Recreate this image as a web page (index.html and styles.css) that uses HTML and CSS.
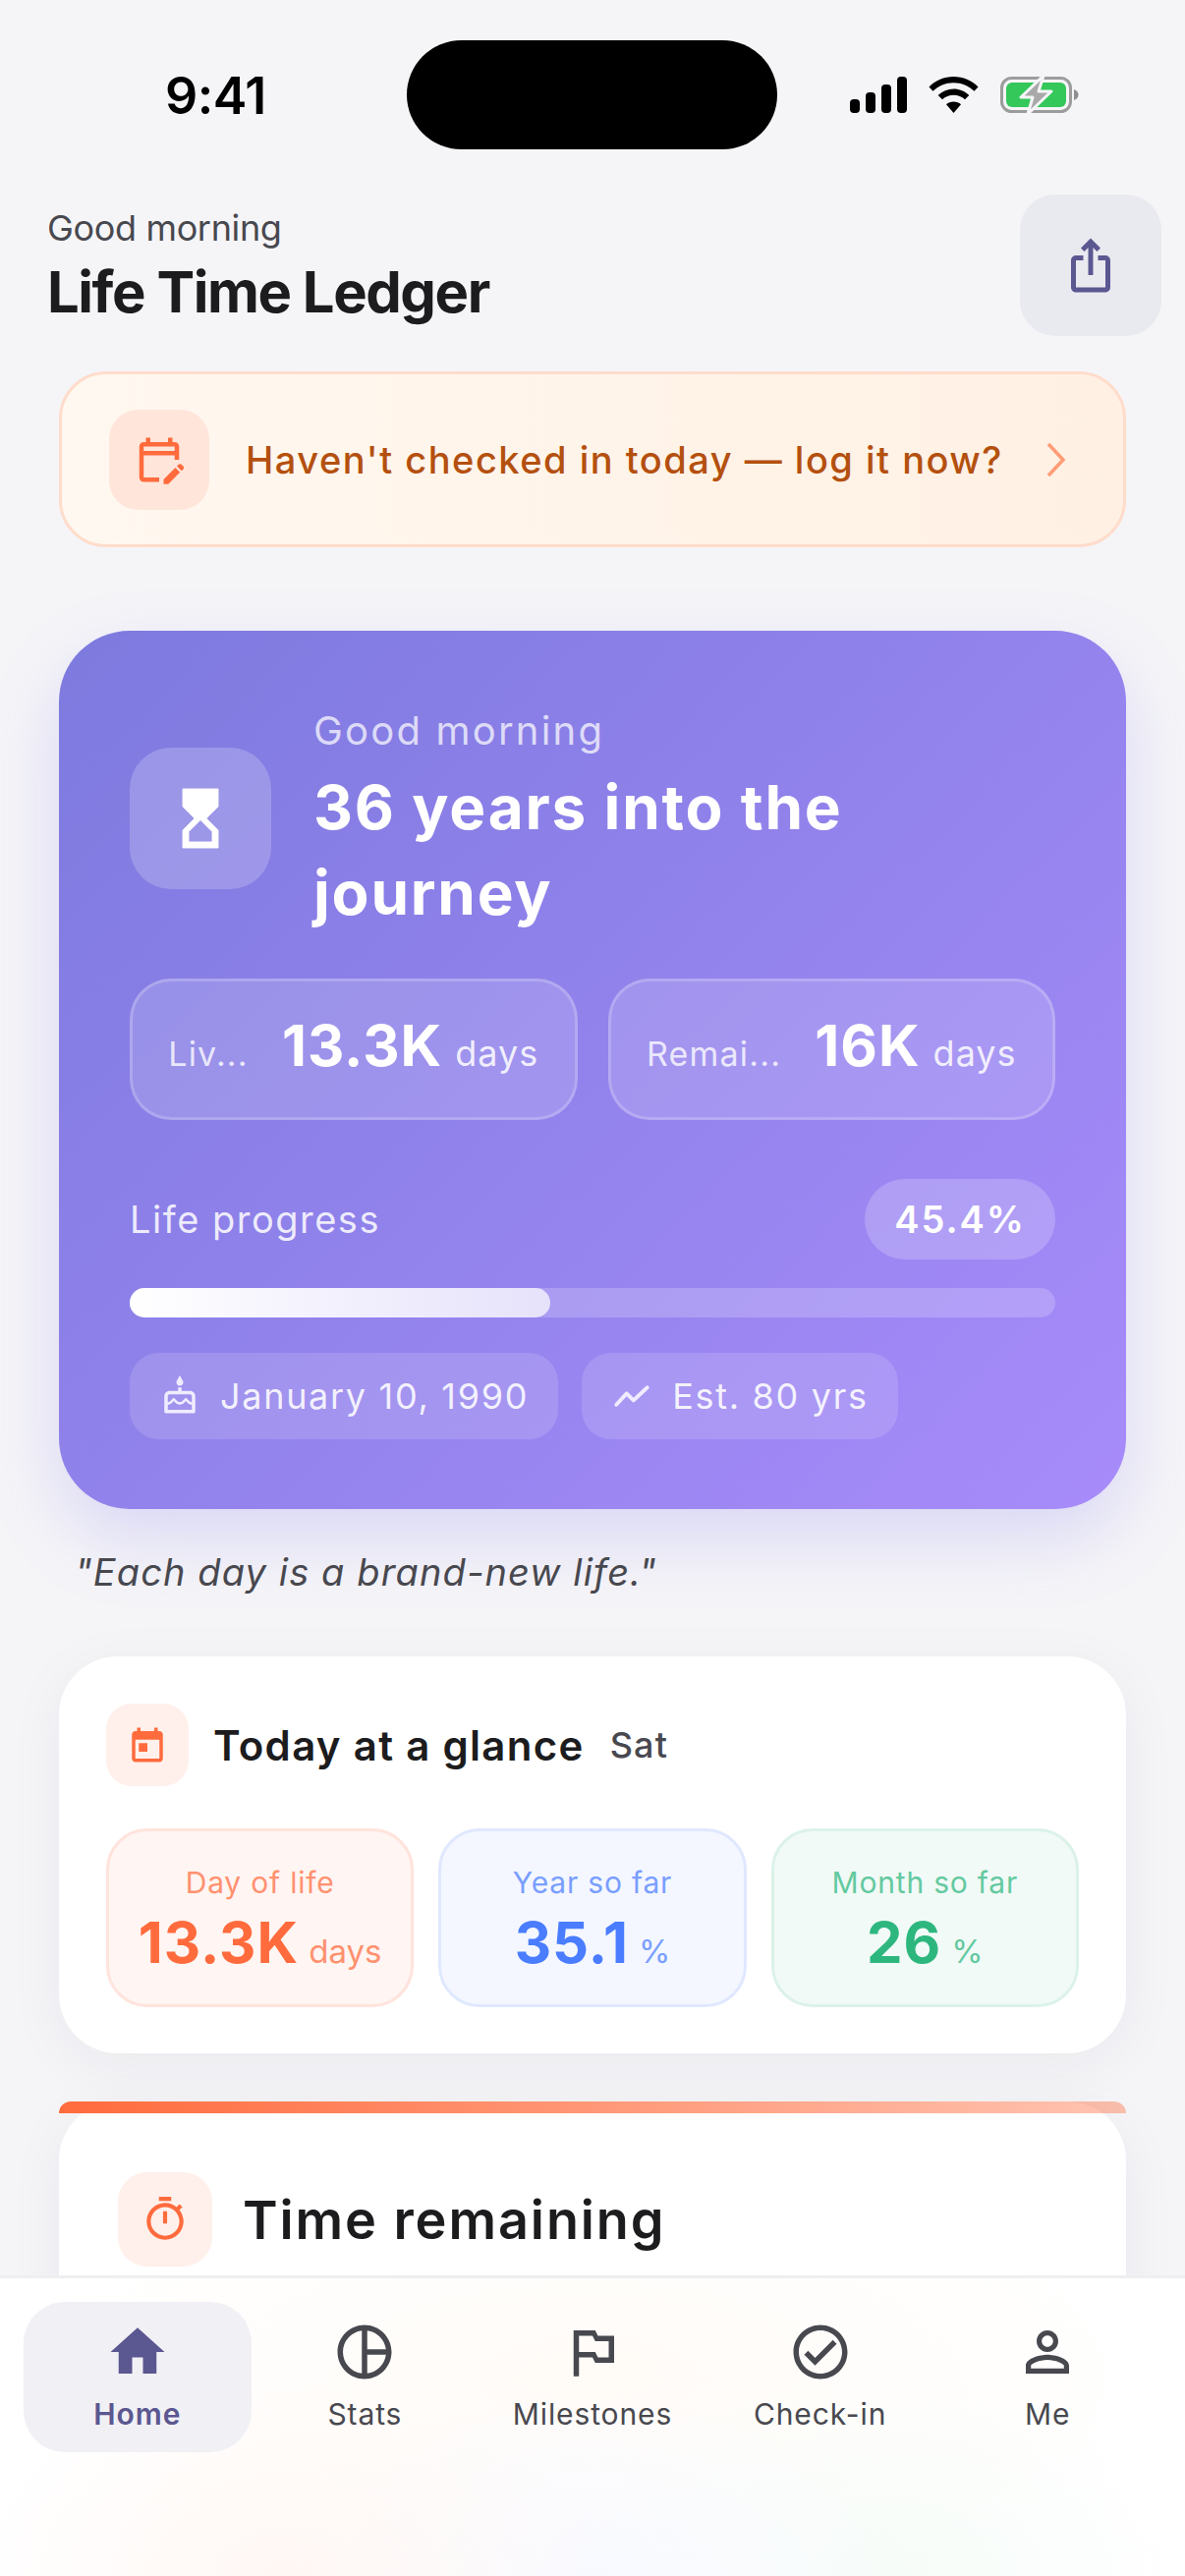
FILE: index.html
```html
<!DOCTYPE html>
<html>

<head>
    <title>Life Time Ledger</title>
    <meta name="viewport" content="width=device-width, initial-scale=1">
    <link rel="stylesheet" href="styles.css">
</head>

<body>
    <div class="phone">
        <div class="status">
            <div class="clock">9:41</div>
            <div class="island"></div>
            <div class="status-icons">
                <svg width="58" height="37" viewBox="0 0 58 37" fill="#000">
                    <rect x="0" y="23" width="10" height="14" rx="4"/>
                    <rect x="16" y="16" width="10" height="21" rx="4"/>
                    <rect x="32" y="8" width="10" height="29" rx="4"/>
                    <rect x="48" y="0" width="10" height="37" rx="4"/>
                </svg>
                <svg width="51" height="37" viewBox="0 0 51 37" fill="#000">
                    <path d="M25.500 0C35 0 44 3.800 50.500 10.500L46.500 14.800C41 9.300 33.500 6.200 25.500 6.200S10 9.300 4.500 14.800L.5 10.500C7 3.800 16 0 25.500 0z"/>
                    <path d="M25.500 12.500C31.500 12.500 37 14.800 41.300 19L37 23.300C33.900 20.400 29.900 18.800 25.500 18.800S17.100 20.400 14 23.300L9.700 19C14 14.800 19.500 12.500 25.500 12.500z"/>
                    <path d="M25.500 25.500C28.500 25.500 31 26.500 33 28.300L25.500 37L18 28.300C20 26.500 22.500 25.500 25.500 25.500z"/>
                </svg>
                <svg width="82" height="39" viewBox="0 0 82 39">
                    <rect x="1.500" y="2.500" width="70" height="34" rx="10" fill="none" stroke="#9c9c9c" stroke-width="3"/>
                    <rect x="6" y="7" width="61" height="25" rx="6" fill="#34c759"/>
                    <path d="M75 14c3 1 4.500 3 4.500 5.500S78 24 75 25z" fill="#8e8e8e"/>
                    <path d="M44 0L21 22h12l-5 17 24-23H39z" fill="#a9a9a9" stroke="#f5f5f8" stroke-width="3" stroke-linejoin="round"/>
                </svg>
            </div>
        </div>

        <div class="top">
            <div>
                <div class="hello">Good morning</div>
                <div class="app-name">Life Time Ledger</div>
            </div>
            <div class="share">
                <svg width="60" height="60" viewBox="0 0 24 24" fill="#5b5790"><path d="M16 5l-1.420 1.420-1.590-1.590V16h-1.980V4.830L9.420 6.420 8 5l4-4 4 4zm4 5v11c0 1.100-.9 2-2 2H6c-1.110 0-2-.9-2-2V10c0-1.110.89-2 2-2h3v2H6v11h12V10h-3V8h3c1.100 0 2 .89 2 2z"/></svg>
            </div>
        </div>

        <div class="scroll">
            <div class="banner">
                <div class="banner-icon">
                    <svg width="54" height="54" viewBox="0 0 24 24" fill="#ff6b3d"><path d="M5 10h14v2h2V6c0-1.100-.9-2-2-2h-1V2h-2v2H8V2H6v2H5c-1.110 0-1.990.9-1.990 2L3 20c0 1.100.89 2 2 2h7v-2H5v-8zm0-4h14v2H5V6zm17.840 10.280-.71.71-2.120-2.120.71-.71c.39-.39 1.020-.39 1.410 0l.71.71c.39.39.39 1.020 0 1.410zm-3.540-.7 2.120 2.120-5.300 5.300H14v-2.120l5.300-5.300z"/></svg>
                </div>
                <div class="banner-text">Haven't checked in today — log it now?</div>
                <svg class="chevron" width="20" height="36" viewBox="0 0 20 36" fill="none" stroke="#ff9c75" stroke-width="3.500"><path d="M2 2l15 16L2 34"/></svg>
            </div>

            <div class="hero">
                <div class="hero-head">
                    <div class="hero-icon">
                        <svg width="72" height="72" viewBox="0 0 24 24" fill="#fff" stroke="#fff" stroke-width=".3" stroke-linejoin="round"><path d="M6 2l.01 6L10 12l-3.990 4.010L6 22h12v-6l-4-4 4-3.990V2H6zm10 14.500V20H8v-3.500l4-4 4 4z" fill-rule="evenodd"/></svg>
                    </div>
                    <div>
                        <div class="hero-hello">Good morning</div>
                        <div class="hero-title">36 years into the journey</div>
                    </div>
                </div>

                <div class="hero-stats">
                    <div class="hero-stat">
                        <span class="hero-stat-label">Liv...</span>
                        <span class="hero-stat-num">13.3K</span>
                        <span class="hero-stat-unit">days</span>
                    </div>
                    <div class="hero-stat">
                        <span class="hero-stat-label">Remai...</span>
                        <span class="hero-stat-num">16K</span>
                        <span class="hero-stat-unit">days</span>
                    </div>
                </div>

                <div class="progress-head">
                    <span class="progress-label">Life progress</span>
                    <span class="progress-badge">45.4%</span>
                </div>
                <div class="progress-track">
                    <div class="progress-fill" style="width: 45.4%;"></div>
                </div>

                <div class="chips">
                    <div class="chip">
                        <svg width="42" height="42" viewBox="0 0 24 24" fill="#f0ecff"><path d="M12 6c1.110 0 2-.9 2-2 0-.38-.1-.73-.29-1.030L12 0l-1.710 2.970c-.19.3-.29.65-.29 1.030 0 1.100.9 2 2 2zm6 3h-5V7h-2v2H6c-1.660 0-3 1.340-3 3v9c0 .55.45 1 1 1h16c.55 0 1-.45 1-1v-9c0-1.660-1.340-3-3-3zm1 11H5v-3c.9-.01 1.760-.37 2.400-1.010l1.090-1.070 1.070 1.070c1.310 1.310 3.590 1.300 4.890 0l1.080-1.070 1.070 1.070c.64.64 1.500 1 2.400 1.010v3zm0-4.500c-.51-.01-.99-.2-1.350-.57l-2.130-2.130-2.140 2.130c-.74.74-2.030.74-2.770 0L8.480 12.800l-2.140 2.130c-.35.36-.83.56-1.340.57V12c0-.55.45-1 1-1h12c.55 0 1 .45 1 1v3.500z"/></svg>
                        January 10, 1990
                    </div>
                    <div class="chip">
                        <svg width="42" height="42" viewBox="0 0 24 24" fill="none" stroke="#f0ecff" stroke-width="2.200" stroke-linecap="round" stroke-linejoin="round"><path d="M3 17l6-6.500 4 4L21 7"/></svg>
                        Est. 80 yrs
                    </div>
                </div>
            </div>

            <div class="quote">"Each day is a brand-new life."</div>

            <div class="card glance">
                <div class="glance-head">
                    <div class="glance-icon">
                        <svg width="42" height="42" viewBox="0 0 24 24" fill="#ff6b3d"><path d="M19 4h-1V2h-2v2H8V2H6v2H5c-1.110 0-1.990.9-1.990 2L3 20c0 1.100.89 2 2 2h14c1.100 0 2-.9 2-2V6c0-1.100-.9-2-2-2zm0 16H5V9h14v11zM7 11h5v5H7z"/></svg>
                    </div>
                    <span class="glance-title">Today at a glance</span>
                    <span class="glance-day">Sat</span>
                </div>
                <div class="tiles">
                    <div class="tile tile-orange">
                        <div class="tile-label">Day of life</div>
                        <div class="tile-value"><span class="tile-num">13.3K</span><span class="tile-unit">days</span></div>
                    </div>
                    <div class="tile tile-blue">
                        <div class="tile-label">Year so far</div>
                        <div class="tile-value"><span class="tile-num">35.1</span><span class="tile-unit">%</span></div>
                    </div>
                    <div class="tile tile-green">
                        <div class="tile-label">Month so far</div>
                        <div class="tile-value"><span class="tile-num">26</span><span class="tile-unit">%</span></div>
                    </div>
                </div>
            </div>

            <div class="card remaining">
                <div class="remaining-strip"></div>
                <div class="remaining-head">
                    <div class="remaining-icon">
                        <svg width="50" height="50" viewBox="0 0 24 24" fill="#ff6b3d"><path d="M15 1H9v2h6V1zm-4 13h2V8h-2v6zm8.030-6.610 1.420-1.420c-.43-.51-.9-.99-1.410-1.410l-1.420 1.420C16.070 4.740 14.120 4 12 4c-4.970 0-9 4.030-9 9s4.020 9 9 9 9-4.030 9-9c0-2.120-.74-4.070-1.970-5.610zM12 20c-3.870 0-7-3.130-7-7s3.130-7 7-7 7 3.130 7 7-3.130 7-7 7z"/></svg>
                    </div>
                    <span class="remaining-title">Time remaining</span>
                </div>
            </div>
        </div>

        <div class="nav">
            <div class="tab tab-on">
                <svg width="66" height="66" viewBox="0 0 24 24" fill="#5b5790"><path d="M10 20v-6h4v6h5v-8h3L12 3 2 12h3v8z"/></svg>
                <span>Home</span>
            </div>
            <div class="tab">
                <svg width="66" height="66" viewBox="0 0 24 24" fill="#48484f"><path d="M12 2C6.480 2 2 6.480 2 12s4.480 10 10 10 10-4.480 10-10S17.520 2 12 2zm7.930 9H13V4.070c3.610.45 6.480 3.320 6.930 6.930zM4 12c0-4.070 3.060-7.440 7-7.930v15.860c-3.940-.49-7-3.860-7-7.930zm9 7.930V13h6.930c-.45 3.610-3.320 6.480-6.930 6.930z"/></svg>
                <span>Stats</span>
            </div>
            <div class="tab">
                <svg width="66" height="66" viewBox="0 0 24 24" fill="#48484f"><path d="M14 6l-1-2H5v17h2v-7h5l1 2h7V6h-6zm4 8h-4l-1-2H7V6h5l1 2h5v6z"/></svg>
                <span>Milestones</span>
            </div>
            <div class="tab">
                <svg width="66" height="66" viewBox="0 0 24 24" fill="#48484f"><path d="M12 2C6.480 2 2 6.480 2 12s4.480 10 10 10 10-4.480 10-10S17.520 2 12 2zm0 18c-4.410 0-8-3.590-8-8s3.590-8 8-8 8 3.590 8 8-3.590 8-8 8zm4.590-12.420L10 14.170l-2.590-2.580L6 13l4 4 8-8z"/></svg>
                <span>Check-in</span>
            </div>
            <div class="tab">
                <svg width="66" height="66" viewBox="0 0 24 24" fill="#48484f"><path d="M12 5.900c1.160 0 2.100.94 2.100 2.100s-.94 2.100-2.100 2.100S9.900 9.160 9.900 8s.94-2.100 2.100-2.100m0 9c2.970 0 6.100 1.460 6.100 2.100v1.100H5.900V17c0-.64 3.130-2.100 6.100-2.100M12 4C9.790 4 8 5.790 8 8s1.790 4 4 4 4-1.790 4-4-1.790-4-4-4zm0 9c-2.670 0-8 1.340-8 4v3h16v-3c0-2.660-5.330-4-8-4z"/></svg>
                <span>Me</span>
            </div>
        </div>
    </div>
</body>

</html>
```

FILE: styles.css
```css
* {
    box-sizing: border-box;
}

html,
body {
    margin: 0;
    height: 100%;
}

body {
    background-color: #f5f5f8;
    color: #1c1c1e;
    font-family: Inter, "Noto Sans", sans-serif;
}

.phone {
    display: flex;
    flex-direction: column;
    width: 1206px;
    height: 2622px;
    overflow: hidden;
}

/* status bar */
.status {
    display: flex;
    align-items: flex-start;
    height: 198px;
    padding: 41px 0 0 0;
}

.clock {
    width: 414px;
    padding: 32px 0 0 168px;
    font-size: 52px;
    line-height: 50px;
    font-weight: 600;
    letter-spacing: -.5px;
    color: #000;
}

.island {
    width: 377px;
    height: 111px;
    border-radius: 56px;
    background-color: #000;
}

.status-icons {
    display: flex;
    align-items: center;
    gap: 22px;
    padding: 36px 0 0 74px;
}

/* header */
.top {
    display: flex;
    justify-content: space-between;
    padding: 0 24px 0 48px;
    height: 144px;
}

.hello {
    margin-top: 11px;
    font-size: 36px;
    line-height: 47px;
    letter-spacing: -.35px;
    color: #48484f;
}

.app-name {
    margin-top: 3px;
    font-size: 58px;
    line-height: 76px;
    font-weight: 700;
    letter-spacing: -1.45px;
}

.share {
    display: flex;
    align-items: center;
    justify-content: center;
    width: 144px;
    height: 144px;
    border-radius: 36px;
    background-color: #e9e9f0;
}

/* scroll area */
.scroll {
    flex: 1;
    min-height: 0;
    overflow: hidden;
    padding: 36px 60px 0;
}

.banner {
    display: flex;
    align-items: center;
    height: 179px;
    padding: 0 58px 0 48px;
    border: 3px solid #ffdccb;
    border-radius: 48px;
    background: linear-gradient(90deg, #fff8f0, #fff0e3);
}

.banner-icon {
    display: flex;
    align-items: center;
    justify-content: center;
    flex: none;
    width: 102px;
    height: 102px;
    border-radius: 30px;
    background-color: #ffe5da;
}

.banner-text {
    flex: 1;
    margin-left: 37px;
    font-size: 38px;
    font-weight: 500;
    letter-spacing: 1.5px;
    color: #b4500f;
    white-space: nowrap;
}

.chevron {
    flex: none;
}

/* hero */
.hero {
    height: 894px;
    margin-top: 85px;
    padding: 72px;
    border-radius: 72px;
    background: linear-gradient(135deg, #7d7ade, #a78bfa);
    box-shadow: 0 30px 72px rgba(125, 110, 230, .22);
    color: #fff;
}

.hero-head {
    display: flex;
    align-items: center;
    gap: 43px;
}

.hero-icon {
    display: flex;
    align-items: center;
    justify-content: center;
    flex: none;
    width: 144px;
    height: 144px;
    border-radius: 42px;
    background-color: rgba(255, 255, 255, .2);
}

.hero-hello {
    font-size: 40px;
    line-height: 60px;
    letter-spacing: 2.2px;
    color: rgba(255, 255, 255, .72);
}

.hero-title {
    width: 600px;
    margin-top: 4px;
    font-size: 62px;
    line-height: 87px;
    font-weight: 700;
    letter-spacing: 1.8px;
}

.hero-stats {
    display: flex;
    gap: 31px;
    margin-top: 44px;
}

.hero-stat {
    display: flex;
    flex: 1;
    align-items: baseline;
    justify-content: center;
    height: 144px;
    padding-top: 30px;
    border: 3px solid rgba(255, 255, 255, .2);
    border-radius: 42px;
    background-color: rgba(255, 255, 255, .15);
}

.hero-stat-label {
    margin-right: 34px;
    font-size: 34px;
    letter-spacing: 1.2px;
    color: rgba(255, 255, 255, .8);
}

.hero-stat-num {
    font-size: 58px;
    font-weight: 700;
    letter-spacing: 1px;
}

.hero-stat-unit {
    margin-left: 13px;
    font-size: 36px;
    letter-spacing: 1px;
    color: rgba(255, 255, 255, .85);
}

.progress-head {
    display: flex;
    align-items: center;
    justify-content: space-between;
    margin-top: 60px;
}

.progress-label {
    font-size: 38px;
    letter-spacing: 1.5px;
    color: rgba(255, 255, 255, .85);
}

.progress-badge {
    padding: 18px 30px;
    border-radius: 41px;
    background-color: rgba(255, 255, 255, .2);
    font-size: 38px;
    line-height: 46px;
    font-weight: 600;
    letter-spacing: 2px;
}

.progress-track {
    height: 30px;
    margin-top: 29px;
    border-radius: 15px;
    background-color: rgba(255, 255, 255, .2);
}

.progress-fill {
    height: 30px;
    border-radius: 15px;
    background: linear-gradient(90deg, #fff, #e6e2fb);
}

.chips {
    display: flex;
    gap: 24px;
    margin-top: 36px;
}

.chip {
    display: flex;
    align-items: center;
    gap: 20px;
    height: 88px;
    padding: 0 30px;
    border-radius: 30px;
    background-color: rgba(255, 255, 255, .14);
    font-size: 36px;
    letter-spacing: 1.7px;
    color: rgba(255, 255, 255, .88);
}

.quote {
    height: 150px;
    padding: 42px 16px 0;
    font-size: 38px;
    line-height: 44px;
    font-style: italic;
    letter-spacing: 1.1px;
    color: #48484f;
}

/* cards */
.card {
    border-radius: 60px;
    background-color: #fff;
    box-shadow: 0 12px 60px rgba(30, 30, 60, .05);
}

.glance {
    height: 404px;
    padding: 48px;
}

.glance-head {
    display: flex;
    align-items: center;
    height: 84px;
}

.glance-icon {
    display: flex;
    align-items: center;
    justify-content: center;
    width: 84px;
    height: 84px;
    margin-right: 25px;
    border-radius: 26px;
    background-color: #fff0eb;
}

.glance-title {
    font-size: 42px;
    font-weight: 600;
    letter-spacing: 1.3px;
}

.glance-day {
    margin-left: 26px;
    font-size: 36px;
    font-weight: 500;
    letter-spacing: 1.2px;
    color: #48484f;
}

.tiles {
    display: flex;
    gap: 25px;
    margin-top: 43px;
}

.tile {
    flex: 1;
    height: 182px;
    padding-top: 33px;
    border: 3px solid;
    border-radius: 42px;
    text-align: center;
}

.tile-label {
    font-size: 30px;
    line-height: 38px;
    letter-spacing: .8px;
}

.tile-value {
    margin-top: 7px;
    line-height: 70px;
    white-space: nowrap;
}

.tile-num {
    font-size: 58px;
    font-weight: 700;
    letter-spacing: 1px;
}

.tile-unit {
    margin-left: 10px;
    font-size: 33px;
}

.tile-orange {
    border-color: #ffe3dc;
    background-color: #fff5f2;
    color: #ff6b3d;
}

.tile-blue {
    border-color: #e0e8ff;
    background-color: #f4f7ff;
    color: #4a7dff;
}

.tile-green {
    border-color: #dcf2e9;
    background-color: #f1faf6;
    color: #2db77f;
}

.tile-label,
.tile-unit {
    opacity: .72;
}

.remaining {
    position: relative;
    height: 400px;
    margin-top: 49px;
    padding: 72px 60px;
}

/* sits over the card's top edge */
.remaining-strip {
    position: absolute;
    top: 0;
    left: 0;
    right: 0;
    height: 12px;
    border-radius: 12px 12px 0 0;
    background: linear-gradient(90deg, #ff6b3d, rgba(255, 107, 61, .4));
}

.remaining-head {
    display: flex;
    align-items: center;
}

.remaining-icon {
    display: flex;
    align-items: center;
    justify-content: center;
    width: 96px;
    height: 96px;
    margin-right: 31px;
    border-radius: 30px;
    background-color: #fff0eb;
}

.remaining-title {
    font-size: 54px;
    font-weight: 600;
    letter-spacing: 1.9px;
}

/* bottom nav */
.nav {
    display: flex;
    flex: none;
    align-items: flex-start;
    height: 306px;
    padding: 24px 24px 0;
    border-top: 3px solid #efeff1;
    background:
        radial-gradient(320px 200px at 290px 300px, #fff7f4, transparent),
        radial-gradient(320px 200px at 600px 310px, #f8f9ff, transparent),
        radial-gradient(320px 200px at 900px 300px, #f6fcf8, transparent),
        radial-gradient(600px 220px at 600px 100px, #fffbf7, transparent),
        #fff;
}

.tab {
    display: flex;
    flex: 1;
    flex-direction: column;
    align-items: center;
    height: 153px;
    padding-top: 18px;
    border-radius: 42px;
    font-size: 30px;
    line-height: 44px;
    letter-spacing: .9px;
    color: #48484f;
}

.tab span {
    margin-top: 8px;
}

.tab-on {
    background-color: #f1f0f5;
    color: #5b5790;
    font-weight: 600;
}
```
